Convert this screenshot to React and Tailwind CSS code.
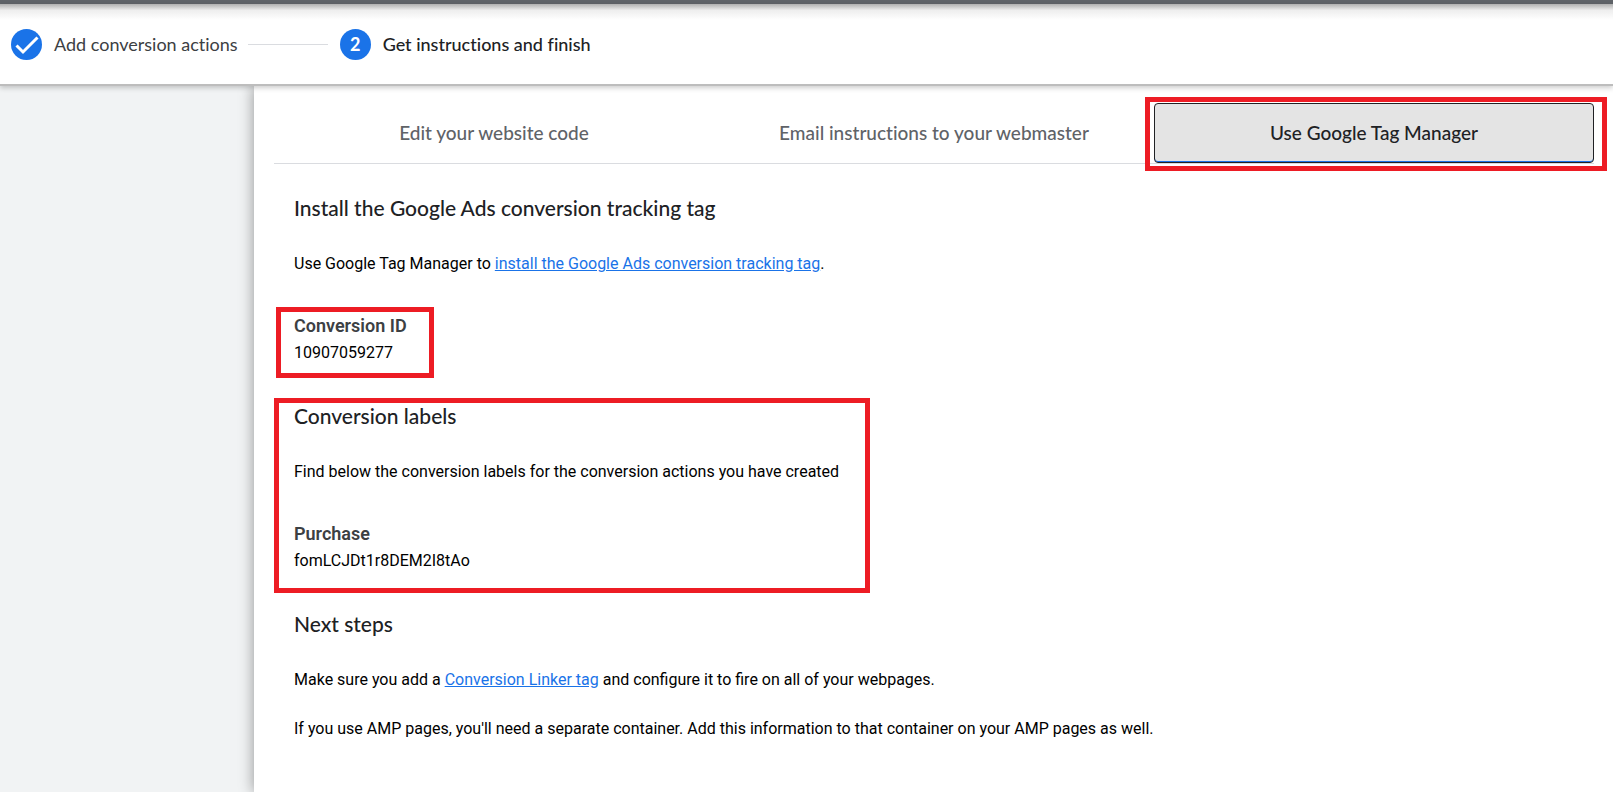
const headingFont = "font-['Google_Sans','Lato',sans-serif] [font-variant-ligatures:none]";

function Heading({ children }) {
  return (
    <h2 className={`${headingFont} text-[21px] leading-6 font-medium text-[#202124]`}>
      {children}
    </h2>
  );
}

function Field({ label, value }) {
  return (
    <dl>
      <dt className="text-[18px] leading-6 font-semibold text-[#3c4043]">{label}</dt>
      <dd className="mt-[3px] leading-6">{value}</dd>
    </dl>
  );
}

function TextLink({ children }) {
  return (
    <a href="#" className="text-[#1a73e8] underline">
      {children}
    </a>
  );
}

function Tab({ children, selected }) {
  return (
    <button
      type="button"
      role="tab"
      aria-selected={Boolean(selected)}
      className={
        selected
          ? "h-full w-full rounded-[4px] border border-[#202124] bg-[#e4e4e4] text-[#202124] shadow-[inset_0_-1px_0_#1a73e8]"
          : "h-full w-full text-[#5f6368]"
      }
    >
      {children}
    </button>
  );
}

export default function App() {
  return (
    <div className="flex min-h-screen flex-col bg-[#f1f3f4] font-['Roboto',sans-serif] text-base text-black">
      <div className="h-1 bg-[#5f6368]" />
      <header className="relative z-10 border-b-2 border-[#bdbdbd] bg-white shadow-[0_2px_5px_rgba(0,0,0,0.2)]">
        <div className="h-4 bg-linear-to-b from-[#b0b0b0] via-[#eeeeee] via-40% to-white" />
        <ol className={`flex h-16 items-start pt-[9px] pl-[11px] ${headingFont} text-[18px]`}>
          <li className="flex items-center">
            <svg viewBox="0 0 31 31" className="size-[31px]" aria-hidden="true">
              <circle cx="15.5" cy="15.5" r="15.5" fill="#1a73e8" />
              <path d="M5.5 16.5 12 23 26.500 8.500" fill="none" stroke="#fff" strokeWidth="3" />
            </svg>
            <span className="ml-3 text-[#3c4043]">Add conversion actions</span>
          </li>
          <li aria-hidden="true" className="mr-3 ml-2.5 mt-[15px] h-px w-20 bg-[#dadce0]" />
          <li className="flex items-center">
            <span className="flex size-[31px] items-center justify-center rounded-full bg-[#1a73e8] text-[18px] font-bold text-white">
              2
            </span>
            <span className="ml-3 font-medium text-[#202124]">Get instructions and finish</span>
          </li>
        </ol>
      </header>

      <main className="ml-[254px] grow bg-white pr-[19px] pl-5 shadow-[0_0_14px_rgba(0,0,0,0.4)]">
        <div
          role="tablist"
          className={`mt-[17px] grid h-[61px] grid-cols-3 border-b border-[#dadce0] ${headingFont} text-[19px] font-medium`}
        >
          <Tab>Edit your website code</Tab>
          <Tab>Email instructions to your webmaster</Tab>
          <div className="relative">
            <Tab selected>Use Google Tag Manager</Tab>
            <div className="pointer-events-none absolute -top-1.5 -right-[13px] -bottom-2 -left-[9px] border-5 border-[#ed1c24]" />
          </div>
        </div>

        <div className="flex flex-col items-start pt-8">
          <section className="flex flex-col items-start">
            <div className="mb-[31px] ml-5 flex flex-col gap-8">
              <Heading>Install the Google Ads conversion tracking tag</Heading>
              <p>
                Use Google Tag Manager to{" "}
                <TextLink>install the Google Ads conversion tracking tag</TextLink>.
              </p>
            </div>
            <div className="ml-0.5 border-5 border-[#ed1c24] pt-0.5 pr-[22px] pb-2 pl-[13px]">
              <Field label="Conversion ID" value="10907059277" />
            </div>
          </section>

          <section className="mt-5 border-5 border-[#ed1c24] pt-px pr-[26px] pb-[15px] pl-[15px]">
            <Heading>Conversion labels</Heading>
            <p className="mt-8 mb-[38px]">
              Find below the conversion labels for the conversion actions you have created
            </p>
            <Field label="Purchase" value="fomLCJDt1r8DEM2I8tAo" />
          </section>

          <section className="mt-[19px] ml-5">
            <Heading>Next steps</Heading>
            <p className="mt-8">
              Make sure you add a <TextLink>Conversion Linker tag</TextLink> and configure it to
              fire on all of your webpages.
            </p>
            <p className="mt-[25px]">
              If you use AMP pages, you'll need a separate container. Add this information to that
              container on your AMP pages as well.
            </p>
          </section>
        </div>
      </main>
    </div>
  );
}
